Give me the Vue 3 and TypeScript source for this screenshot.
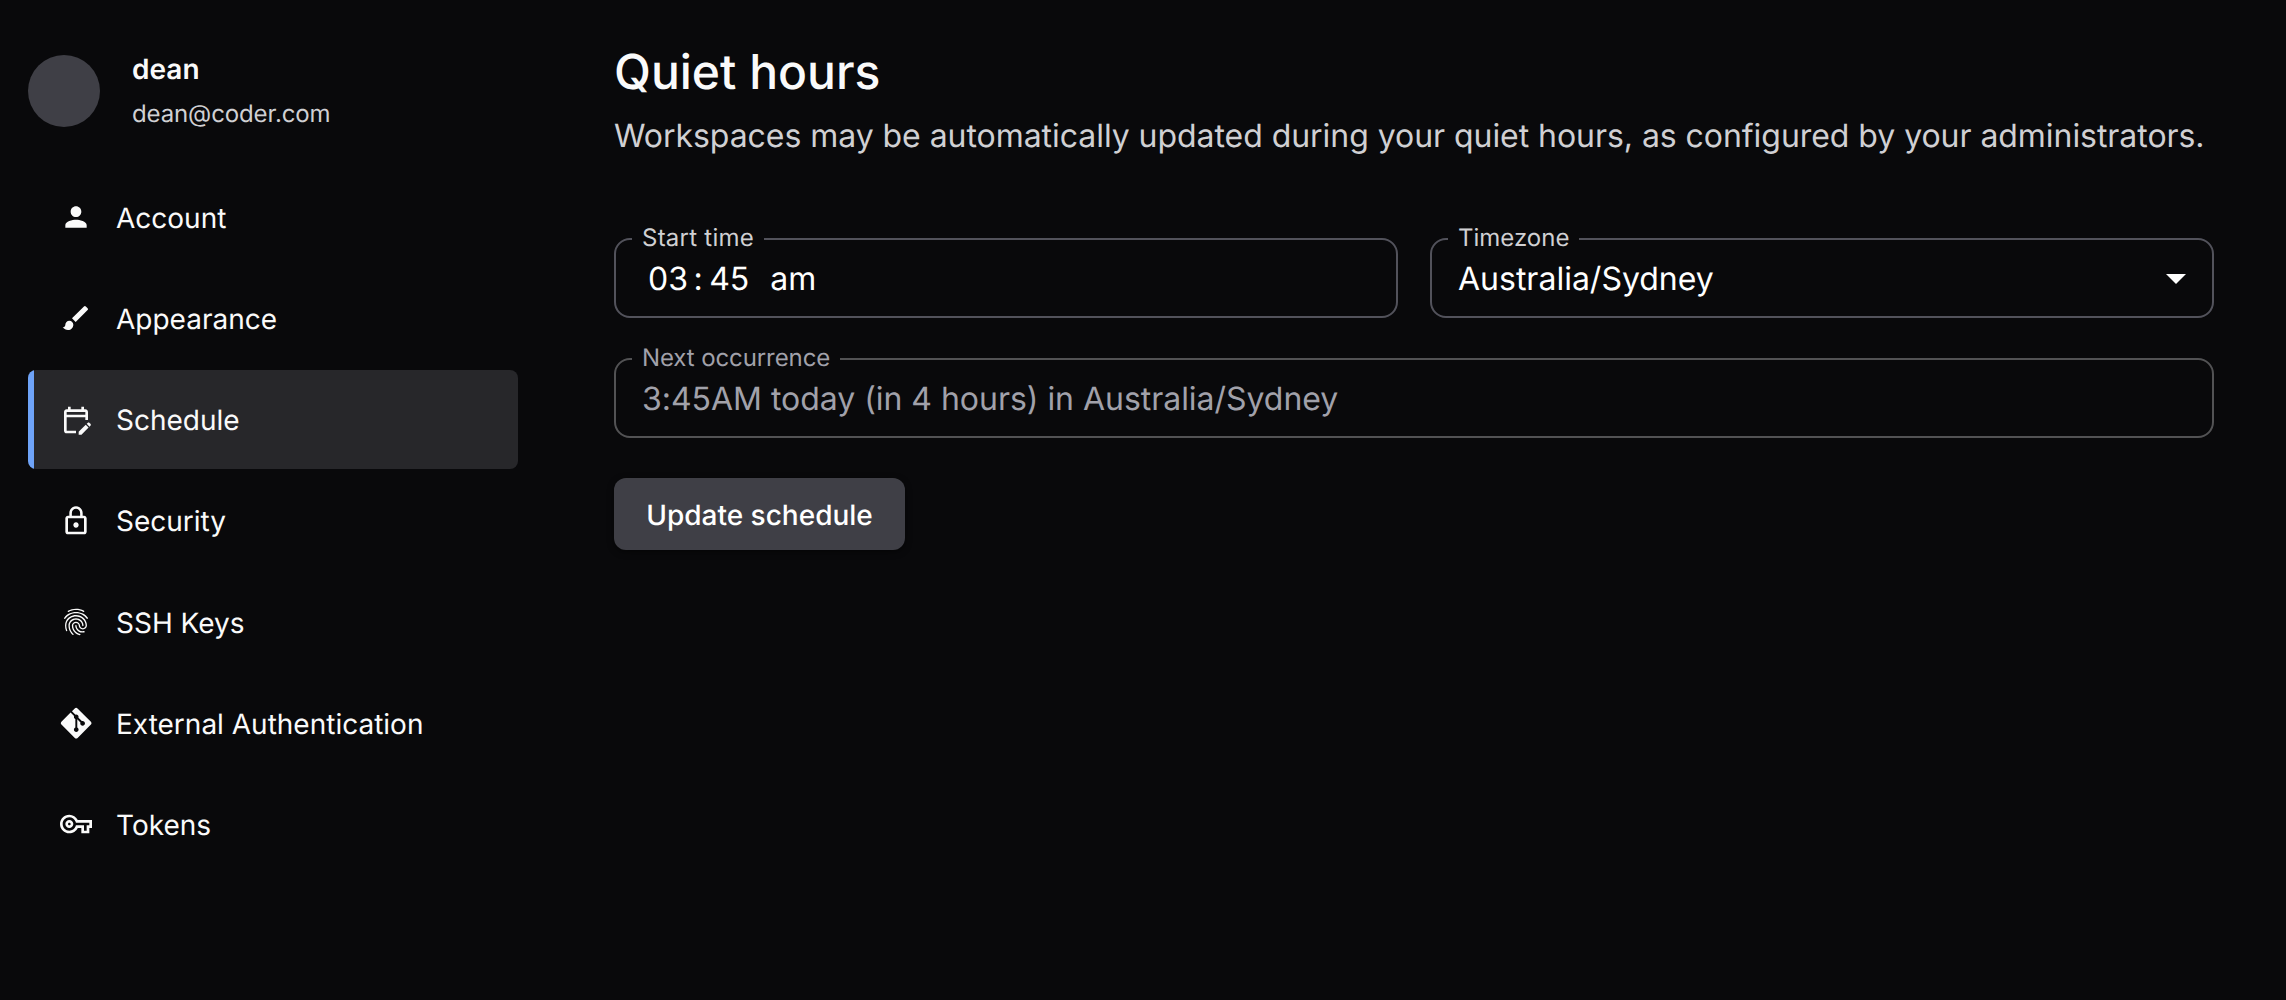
<script setup lang="ts">
interface NavItem {
  label: string
  viewBox: string
  path: string
  active?: boolean
}

const navItems: NavItem[] = [
  {
    label: 'Account',
    viewBox: '0 0 24 24',
    path: 'M12 12c2.21 0 4-1.79 4-4s-1.79-4-4-4-4 1.79-4 4 1.79 4 4 4zm0 2c-2.67 0-8 1.34-8 4v2h16v-2c0-2.66-5.33-4-8-4z',
  },
  {
    label: 'Appearance',
    viewBox: '0 0 24 24',
    path: 'M7 14c-1.66 0-3 1.34-3 3 0 1.31-1.16 2-2 2 .92 1.22 2.49 2 4 2 2.21 0 4-1.79 4-4 0-1.66-1.34-3-3-3zm13.71-9.37-1.34-1.34a.9959.9959 0 0 0-1.41 0L9 12.25 11.75 15l8.96-8.96c.39-.39.39-1.02 0-1.41z',
  },
  {
    label: 'Schedule',
    viewBox: '0 0 24 24',
    path: 'M5 10h14v2h2V6c0-1.1-.9-2-2-2h-1V2h-2v2H8V2H6v2H5c-1.11 0-1.99.9-1.99 2L3 20c0 1.1.89 2 2 2h7v-2H5V10zm0-4h14v2H5V6zm17.84 10.28-.71.71-2.12-2.12.71-.71c.39-.39 1.02-.39 1.41 0l.71.71c.39.39.39 1.02 0 1.41zm-3.54-.7 2.12 2.12-5.3 5.3H14v-2.12l5.3-5.3z',
    active: true,
  },
  {
    label: 'Security',
    viewBox: '0 0 24 24',
    path: 'M12 17c1.1 0 2-.9 2-2s-.9-2-2-2-2 .9-2 2 .9 2 2 2zm6-9h-1V6c0-2.76-2.24-5-5-5S7 3.24 7 6v2H6c-1.1 0-2 .9-2 2v10c0 1.1.9 2 2 2h12c1.1 0 2-.9 2-2V10c0-1.1-.9-2-2-2zM8.9 6c0-1.71 1.39-3.1 3.1-3.1s3.1 1.39 3.1 3.1v2H8.9V6zM18 20H6V10h12v10z',
  },
  {
    label: 'SSH Keys',
    viewBox: '0 0 24 24',
    path: 'M17.81 4.47c-.08 0-.16-.02-.23-.06C15.66 3.42 14 3 12.01 3c-1.98 0-3.86.47-5.57 1.41-.24.13-.54.04-.68-.2-.13-.24-.04-.55.2-.68C7.82 2.52 9.86 2 12.01 2c2.13 0 3.99.47 6.03 1.52.25.13.34.43.21.67-.09.18-.26.28-.44.28zM3.5 9.72c-.1 0-.2-.03-.29-.09-.23-.16-.28-.47-.12-.7.99-1.4 2.25-2.5 3.75-3.27C9.98 4.04 14 4.03 17.15 5.65c1.5.77 2.76 1.86 3.75 3.25.16.22.11.54-.12.7-.23.16-.54.11-.7-.12-.9-1.26-2.04-2.25-3.39-2.94-2.87-1.47-6.54-1.47-9.4.01-1.36.7-2.5 1.7-3.4 2.96-.08.14-.23.21-.39.21zm6.25 12.07c-.13 0-.26-.05-.35-.15-.87-.87-1.34-1.43-2.01-2.64-.69-1.23-1.05-2.73-1.05-4.34 0-2.97 2.54-5.39 5.66-5.39s5.66 2.42 5.66 5.39c0 .28-.22.5-.5.5s-.5-.22-.5-.5c0-2.42-2.09-4.39-4.66-4.39-2.57 0-4.66 1.97-4.66 4.39 0 1.44.32 2.77.93 3.85.64 1.15 1.08 1.64 1.85 2.42.19.2.19.51 0 .71-.11.1-.24.15-.37.15zm7.17-1.85c-1.19 0-2.24-.3-3.1-.89-1.49-1.01-2.38-2.65-2.38-4.39 0-.28.22-.5.5-.5s.5.22.5.5c0 1.41.72 2.74 1.94 3.56.71.48 1.54.71 2.54.71.24 0 .64-.03 1.04-.1.27-.05.53.13.58.41.05.27-.13.53-.41.58-.57.11-1.07.12-1.21.12zM14.91 22c-.04 0-.09-.01-.13-.02-1.59-.44-2.63-1.03-3.72-2.1-1.4-1.39-2.17-3.24-2.17-5.22 0-1.62 1.38-2.94 3.08-2.94 1.7 0 3.08 1.32 3.08 2.94 0 1.07.93 1.94 2.08 1.94s2.08-.87 2.08-1.94c0-3.77-3.25-6.83-7.25-6.83-2.84 0-5.44 1.58-6.61 4.03-.39.81-.59 1.76-.59 2.8 0 .78.07 2.01.67 3.61.1.26-.03.55-.29.64-.26.1-.55-.04-.64-.29-.49-1.31-.73-2.61-.73-3.96 0-1.2.23-2.29.68-3.24 1.33-2.79 4.28-4.6 7.51-4.6 4.55 0 8.25 3.51 8.25 7.83 0 1.62-1.38 2.94-3.08 2.94s-3.08-1.32-3.08-2.94c0-1.07-.93-1.94-2.08-1.94s-2.08.87-2.08 1.94c0 1.71.66 3.31 1.87 4.51.95.94 1.86 1.46 3.27 1.85.27.07.42.35.35.61-.05.23-.26.38-.47.38z',
  },
  {
    label: 'External Authentication',
    viewBox: '0 0 96 96',
    path: 'M92.71 44.408 52.591 4.291c-2.31-2.311-6.057-2.311-8.369 0l-8.33 8.332L46.459 23.19c2.456-.83 5.272-.273 7.229 1.685 1.969 1.97 2.521 4.81 1.67 7.275l10.186 10.185c2.465-.85 5.307-.3 7.275 1.671 2.75 2.75 2.75 7.206 0 9.958-2.752 2.751-7.208 2.751-9.961 0-2.068-2.07-2.58-5.11-1.531-7.658l-9.5-9.499v24.997c.67.332 1.303.774 1.861 1.332 2.75 2.75 2.75 7.206 0 9.959-2.75 2.749-7.209 2.749-9.957 0-2.75-2.754-2.75-7.21 0-9.959.68-.679 1.467-1.193 2.307-1.537V36.369c-.84-.344-1.625-.853-2.307-1.537-2.083-2.082-2.584-5.14-1.516-7.698L31.798 16.715 4.288 44.222c-2.311 2.313-2.311 6.06 0 8.371l40.121 40.118c2.31 2.311 6.056 2.311 8.369 0L92.71 52.779c2.311-2.311 2.311-6.06 0-8.371z',
  },
  {
    label: 'Tokens',
    viewBox: '0 0 24 24',
    path: 'M22 19h-6v-4h-2.68c-1.14 2.42-3.6 4-6.32 4-3.86 0-7-3.14-7-7s3.14-7 7-7c2.72 0 5.17 1.58 6.32 4H24v6h-2v4zm-4-2h2v-4h2v-2H11.94l-.23-.67C11.01 8.34 9.11 7 7 7c-2.76 0-5 2.24-5 5s2.24 5 5 5c2.11 0 4.01-1.34 4.71-3.33l.23-.67H18v4zM7 15c-1.65 0-3-1.35-3-3s1.35-3 3-3 3 1.35 3 3-1.35 3-3 3zm0-4c-.55 0-1 .45-1 1s.45 1 1 1 1-.45 1-1-.45-1-1-1z',
  },
]
</script>

<template>
  <div class="page">
    <aside class="sidebar">
      <div class="user">
        <div class="avatar"></div>
        <div class="user-text">
          <span class="user-name">dean</span>
          <span class="user-email">dean@coder.com</span>
        </div>
      </div>
      <nav class="nav">
        <a v-for="item in navItems" :key="item.label" class="nav-item" :class="{ active: item.active }">
          <svg class="nav-icon" :viewBox="item.viewBox" aria-hidden="true"><path :d="item.path" /></svg>
          <span class="nav-label">{{ item.label }}</span>
        </a>
      </nav>
    </aside>

    <main class="main">
      <h1 class="title">Quiet hours</h1>
      <p class="description">
        Workspaces may be automatically updated during your quiet hours, as configured by your administrators.
      </p>

      <form class="form" @submit.prevent>
        <div class="row">
          <fieldset class="field start">
            <legend><span>Start time</span></legend>
            <div class="value time">
              <span class="seg">03</span><span class="colon">:</span><span class="seg">45</span><span class="seg meridiem">am</span>
            </div>
          </fieldset>
          <fieldset class="field">
            <legend><span>Timezone</span></legend>
            <div class="value">
              <span>Australia/Sydney</span>
              <svg class="caret" viewBox="0 0 24 24" aria-hidden="true"><path d="M7 10l5 5 5-5z" /></svg>
            </div>
          </fieldset>
        </div>
        <fieldset class="field disabled">
          <legend><span>Next occurrence</span></legend>
          <div class="value">
            <span>3:45AM today (in 4 hours) in Australia/Sydney</span>
          </div>
        </fieldset>
        <button class="submit" type="submit">Update schedule</button>
      </form>
    </main>
  </div>
</template>

<style>
html,
body {
  background: #09090b;
}
</style>

<style scoped>
.page {
  display: flex;
  box-sizing: border-box;
  width: 2286px;
  height: 1000px;
  padding: 0 72px 0 28px;
  gap: 96px;
  overflow: hidden;
  background: #09090b;
  color: #fafafa;
  font-family: Inter, "Liberation Sans", sans-serif;
  text-rendering: geometricPrecision;
}

.sidebar {
  flex: none;
  width: 490px;
}

.user {
  display: flex;
  align-items: center;
  height: 72px;
  margin-top: 55px;
  gap: 32px;
}

.avatar {
  width: 72px;
  height: 72px;
  border-radius: 50%;
  background: #3f3f46;
}

.user-text {
  display: flex;
  flex-direction: column;
}

.user-name {
  font-size: 28px;
  font-weight: 600;
  line-height: 45px;
}

.user-email {
  font-size: 24px;
  line-height: 43px;
  letter-spacing: -0.12px;
  color: #d0d0d3;
}

.nav {
  display: flex;
  flex-direction: column;
  gap: 2px;
  margin-top: 40.6px;
}

.nav-item {
  position: relative;
  display: flex;
  align-items: center;
  box-sizing: border-box;
  height: 99.2px;
  padding: 0 32px;
  gap: 24px;
  border-radius: 8px;
  overflow: hidden;
  font-size: 28px;
  line-height: 51px;
}

.nav-label {
  padding-top: 2.3px;
}

.nav-item.active {
  background: #27272a;
}

.nav-item.active::before {
  content: "";
  position: absolute;
  left: 0;
  top: 0;
  width: 6px;
  height: 100%;
  background: #6ea3f8;
}

.nav-icon {
  flex: none;
  width: 32px;
  height: 32px;
  fill: currentColor;
}

.main {
  flex: 1;
  min-width: 0;
  padding-top: 36px;
}

.title {
  margin: 0;
  font-size: 48px;
  font-weight: 500;
  line-height: 72px;
}

.description {
  margin: 2px 0 0;
  font-size: 32px;
  line-height: 51px;
  letter-spacing: -0.05px;
  white-space: nowrap;
  color: #d0d0d3;
}

.form {
  display: flex;
  flex-direction: column;
  align-items: stretch;
  gap: 40px;
  margin-top: 77px;
}

.row {
  display: flex;
  gap: 32px;
}

.field {
  flex: 1;
  box-sizing: border-box;
  min-width: 0;
  height: 80px;
  margin: 0;
  padding: 0 16px;
  border: 2px solid #52525b;
  border-radius: 16px;
}

.field legend {
  height: 2px;
  padding: 0;
  font-size: 24px;
  line-height: 0;
  color: #d0d0d3;
}

.field.start legend {
  letter-spacing: 0.25px;
}

.field legend span {
  display: inline-block;
  padding: 0 10px;
}

.value {
  display: flex;
  align-items: center;
  justify-content: space-between;
  height: 76px;
  padding: 0 10px;
  font-size: 32px;
  color: #fff;
}

.value.time {
  justify-content: flex-start;
  padding-left: 12px;
}

.seg {
  padding: 0 4px;
}

.colon {
  padding: 0 2.5px 0 1.5px;
}

.meridiem {
  margin-left: 13px;
}

.caret {
  width: 48px;
  height: 48px;
  margin-right: -14px;
  fill: #fff;
}

.field.disabled {
  border-color: #525254;
}

.disabled legend,
.disabled .value {
  color: #a1a1aa;
}

.disabled legend {
  letter-spacing: -0.1px;
}

.disabled .value {
  letter-spacing: -0.03px;
}

.submit {
  align-self: flex-start;
  width: 291px;
  height: 72px;
  padding: 2px 0 0;
  border: 0;
  border-radius: 12px;
  background: #3f3f46;
  box-shadow: 0 2px 6px rgba(0, 0, 0, 0.5);
  font-family: inherit;
  font-size: 28px;
  font-weight: 500;
  text-rendering: inherit;
  color: #fff;
}
</style>
